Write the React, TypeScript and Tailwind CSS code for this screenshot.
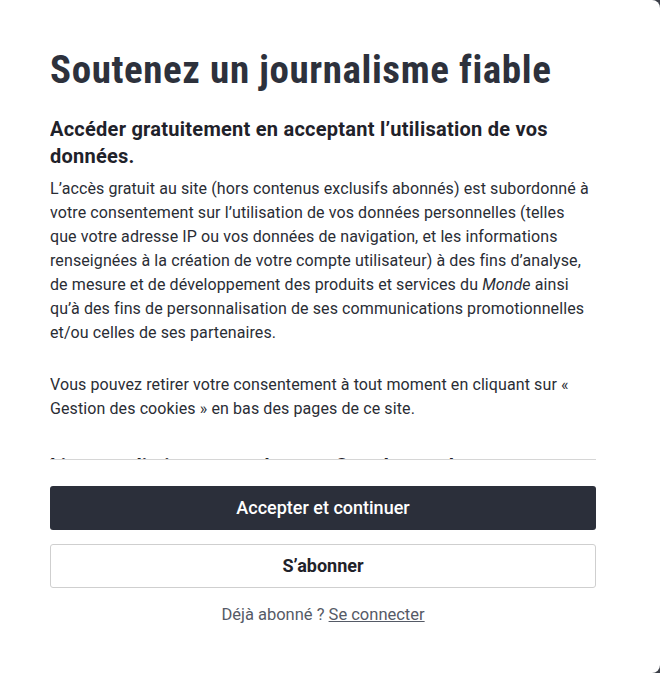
import React from "react";

export default function App() {
  return (
    <div className="w-[660px] h-[673px] bg-[#3b3f48] overflow-hidden">
      <div className="w-[660px] h-[673px] bg-white rounded-r-[8px] flex flex-col" style={{ fontFamily: "Roboto, 'Liberation Sans', sans-serif" }}>
        <div className="pl-[50px] w-[596px] pt-[48px] flex flex-col">
          <h1 className="text-[39px] leading-[44px] font-bold text-[#2d313c] whitespace-nowrap tracking-[0.6px] [font-stretch:75%]">
            Soutenez un journalisme fiable
          </h1>
          <div className="mt-[23.5px] h-[344px] overflow-hidden border-b border-[#d6d6d6] pr-[6px]">
            <h2 className="text-[20px] leading-[27px] font-bold text-[#1f222a] tracking-[0.25px]">
              Accéder gratuitement en acceptant l’utilisation de vos données.
            </h2>
            <p className="mt-[7.5px] text-[16px] leading-[24px] text-[#2a2d35] tracking-[0.1px]">
              L’accès gratuit au site (hors contenus exclusifs abonnés) est subordonné à votre consentement sur l’utilisation de vos données personnelles (telles que votre adresse IP ou vos données de navigation, et les informations renseignées à la création de votre compte utilisateur) à des fins d’analyse, de mesure et de développement des produits et services du <i>Monde</i> ainsi qu’à des fins de personnalisation de ses communications promotionnelles et/ou celles de ses partenaires.
            </p>
            <p className="mt-[28px] text-[16px] leading-[24px] text-[#2a2d35] tracking-[0.1px]">
              Vous pouvez retirer votre consentement à tout moment en cliquant sur « Gestion des cookies » en bas des pages de ce site.
            </p>
            <h2 className="mt-[32px] text-[20px] leading-[27px] font-bold text-[#1f222a]">
              Lire sans limite <i>Le Monde</i> et profiter de tous les contenus
            </h2>
          </div>
          <button className="mt-[26px] h-[44px] w-full rounded-[3px] bg-[#2b2f3a] text-white text-[18px] font-medium">
            Accepter et continuer
          </button>
          <button className="mt-[14px] h-[44px] w-full rounded-[3px] bg-white border border-[#cfcfcf] text-[#1f222a] text-[18px] font-bold">
            S’abonner
          </button>
          <div className="mt-[17px] text-center text-[16.5px] leading-[20px] text-[#555a66]">
            Déjà abonné ? <span className="underline">Se connecter</span>
          </div>
        </div>
      </div>
    </div>
  );
}
